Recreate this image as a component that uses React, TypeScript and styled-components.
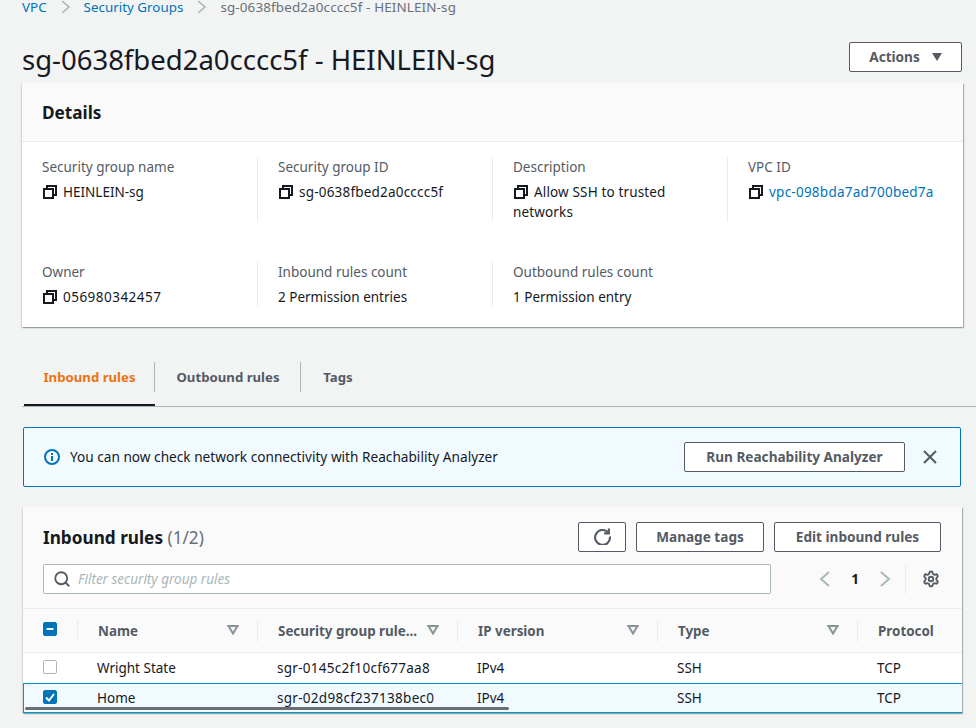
import React from 'react'
import styled, { createGlobalStyle } from 'styled-components'
import { Search, Settings } from 'lucide-react'

const GlobalStyle = createGlobalStyle`
    html, body {
        margin: 0;
        height: 100%;
        overflow: hidden;
        background: #f2f3f3;
        color: #16191f;
        font-family: "Noto Sans", "Open Sans", sans-serif;
        font-size: 14px;
    }
    * { box-sizing: border-box; }
`;

const Page = styled.div`
    display: flex;
    flex-direction: column;
    width: 976px;
    height: 728px;
    overflow: hidden;
`;

const Crumbs = styled.nav`
    display: flex;
    align-items: center;
    height: 14px;
    padding-left: 22px;
    font-size: 13.4px;
    line-height: 14px;
    color: #687078;
`;

const CrumbLink = styled.a`
    color: #0073bb;
`;

const CrumbCurrent = styled.span`
    letter-spacing: 0.15px;
`;

const CrumbSep = styled.svg`
    width: 9px;
    height: 14px;
    margin: 0 14px 0 14px;
    fill: none;
    stroke: #aab7b8;
    stroke-width: 1.6;
`;

const TitleRow = styled.div`
    display: flex;
    align-items: flex-start;
    justify-content: space-between;
    padding: 28px 14px 0 22px;
    height: 69px;
`;

const Title = styled.h1`
    margin: 0;
    font-size: 27.5px;
    font-weight: 400;
    line-height: 35px;
`;

const Button = styled.button<{ $w: number }>`
    display: flex;
    align-items: center;
    justify-content: center;
    gap: 12px;
    width: ${p => p.$w}px;
    height: 30px;
    padding: 0 0 1px;
    background: #fff;
    border: 1px solid #545b64;
    border-radius: 2px;
    color: #545b64;
    font-family: inherit;
    font-size: 13.6px;
    font-weight: 700;
`;

const Caret = styled.span`
    width: 0;
    height: 0;
    border-left: 5.5px solid transparent;
    border-right: 5.5px solid transparent;
    border-top: 8px solid #545b64;
`;

const DetailsCard = styled.section`
    width: 941px;
    margin-left: 22px;
    background: #fff;
    box-shadow: 1px 1px 1px 0 rgba(0, 28, 36, 0.3), -1px 1px 1px 0 rgba(0, 28, 36, 0.12);
`;

const CardHeader = styled.div`
    display: flex;
    align-items: center;
    height: 59px;
    padding-left: 20px;
    background: #fafafa;
    border-bottom: 1px solid #eaeded;
`;

const CardTitle = styled.h2`
    margin: 0;
    font-size: 17.2px;
    font-weight: 700;
`;

const DetailsGrid = styled.div`
    display: grid;
    grid-template-columns: 236px 235px 235px 235px;
    grid-auto-rows: auto;
    row-gap: 40px;
    padding: 15px 0 20px 0;
`;

const Field = styled.div<{ $last?: boolean }>`
    min-height: 45px;
    padding: 0 16px 0 20px;
    border-right: ${p => (p.$last ? 'none' : '1px solid #eaeded')};
`;

const FieldTop = styled(Field)`
    min-height: 65px;
`;

const FieldLabel = styled.div`
    color: #545b64;
    font-size: 13.5px;
    line-height: 20px;
    margin-bottom: 5px;
`;

const FieldValue = styled.div<{ $tracking?: number }>`
    font-size: 13.5px;
    line-height: 20px;
    letter-spacing: ${p => p.$tracking ?? 0}px;
`;

const ValueLink = styled.a`
    color: #0073bb;
`;

const CopyIcon = styled.svg`
    display: inline-block;
    width: 14px;
    height: 14px;
    margin: 0 6px 0 1px;
    vertical-align: -2px;
    fill: none;
    stroke: #16191f;
    stroke-width: 2;
`;

const Tabs = styled.div`
    display: flex;
    align-items: flex-start;
    height: 45px;
    margin: 35px 0 0 22px;
    padding-left: 2px;
    border-bottom: 1px solid #aab7b8;
`;

const Tab = styled.div<{ $active?: boolean; $w: number; $last?: boolean }>`
    position: relative;
    width: ${p => p.$w}px;
    height: 44px;
    padding-top: 5px;
    text-align: center;
    font-size: 13.2px;
    font-weight: 700;
    line-height: 20px;
    color: ${p => (p.$active ? '#ec7211' : '#545b64')};
    border-bottom: ${p => (p.$active ? '2px solid #16191f' : 'none')};

    &::after {
        content: '';
        display: ${p => (p.$last ? 'none' : 'block')};
        position: absolute;
        right: 0;
        top: 0;
        width: 1px;
        height: 30px;
        background: #aab7b8;
    }
`;

const Banner = styled.div`
    display: flex;
    align-items: center;
    width: 938px;
    height: 60px;
    margin: 20px 0 20px 23px;
    padding-left: 20px;
    background: #f1faff;
    border: 1px solid #0073bb;
    border-radius: 2px;
`;

const InfoIcon = styled.svg`
    width: 16px;
    height: 16px;
    margin-right: 10px;
    flex: none;
`;

const BannerText = styled.div`
    flex: 1;
    padding-bottom: 2px;
    font-size: 13.65px;
`;

const CloseIcon = styled.svg`
    width: 14px;
    height: 14px;
    margin: 0 23px 0 18px;
    fill: none;
    stroke: #545b64;
    stroke-width: 2;
`;

const TableCard = styled.section`
    position: relative;
    width: 939px;
    height: 206px;
    margin-left: 23px;
    background: #fff;
    box-shadow: 1px 1px 1px 0 rgba(0, 28, 36, 0.3), -1px 1px 1px 0 rgba(0, 28, 36, 0.12);
    overflow: hidden;
`;

const TableHead = styled.div`
    height: 102px;
    padding: 15px 21px 0 20px;
    background: #fafafa;
    border-bottom: 1px solid #eaeded;
`;

const HeadRow = styled.div`
    display: flex;
    align-items: center;
    gap: 10px;
    height: 30px;
`;

const TableTitle = styled(CardTitle)`
    flex: 1;
`;

const Count = styled.span`
    color: #687078;
    font-weight: 400;
`;

const FilterRow = styled.div`
    display: flex;
    align-items: center;
    height: 30px;
    margin-top: 12px;
`;

const FilterInput = styled.div`
    display: flex;
    align-items: center;
    gap: 7px;
    width: 728px;
    height: 30px;
    padding-left: 9px;
    background: #fff;
    border: 1px solid #aab7b8;
    border-radius: 2px;
    color: #aab7b8;
    font-size: 13.5px;
    font-style: italic;
`;

const Pager = styled.div`
    display: flex;
    align-items: center;
    gap: 16px;
    margin-left: 48px;
    font-size: 13.5px;
    font-weight: 700;
`;

const PagerArrow = styled.svg`
    width: 12px;
    height: 16px;
    fill: none;
    stroke: #aab7b8;
    stroke-width: 2;
`;

const PagerNumber = styled.span`
    width: 16px;
    text-align: center;
`;

const ToolDivider = styled.div`
    width: 1px;
    height: 30px;
    margin: 0 16px 0 14px;
    background: #eaeded;
`;

const Row = styled.div<{ $head?: boolean; $selected?: boolean }>`
    display: grid;
    grid-template-columns: 54px 180px 200px 200px 200px 105px;
    align-items: center;
    height: ${p => (p.$head ? '44px' : '30px')};
    background: ${p => (p.$head ? '#fafafa' : p.$selected ? '#f1faff' : '#fff')};
    border-bottom: ${p => (p.$head ? '1px solid #eaeded' : 'none')};
    box-shadow: ${p => (p.$selected
        ? 'inset 1px 0 0 #0099c5, inset 0 1px 0 #0099c5, inset 0 -1px 0 #0099c5'
        : 'none')};
`;

const HeadCell = styled.div`
    display: flex;
    align-items: center;
    justify-content: space-between;
    height: 22px;
    padding: 0 18px 0 20px;
    border-left: 1px solid #eaeded;
    color: #545b64;
    font-size: 13.4px;
    font-weight: 700;
    white-space: nowrap;
`;

const SortIcon = styled.svg`
    width: 12px;
    height: 10px;
    margin-top: -2px;
    fill: none;
    stroke: #879596;
    stroke-width: 2;
`;

const CheckCell = styled.div`
    display: flex;
    align-items: center;
    padding-left: 20px;
`;

const Box = styled.span<{ $on?: boolean }>`
    display: flex;
    align-items: center;
    justify-content: center;
    width: 14px;
    height: 14px;
    margin-top: -3px;
    background: ${p => (p.$on ? '#0073bb' : '#fff')};
    border: 1px solid ${p => (p.$on ? '#0073bb' : '#aab7b8')};
    border-radius: 2px;
`;

const BoxMark = styled.svg`
    width: 12px;
    height: 12px;
    fill: none;
    stroke: #fff;
    stroke-width: 2;
`;

const Cell = styled.div<{ $tracking?: number }>`
    padding-left: 20px;
    margin-top: -1px;
    font-size: 13.5px;
    letter-spacing: ${p => p.$tracking ?? 0}px;
`;

const Scrollbar = styled.div`
    position: absolute;
    left: 2px;
    bottom: 3px;
    width: 484px;
    height: 3px;
    border-radius: 2px;
    background: #6b6f73;
`;

const rules = [
    { name: 'Wright State', id: 'sgr-0145c2f10cf677aa8', selected: false },
    { name: 'Home', id: 'sgr-02d98cf237138bec0', selected: true },
]

const Copy = () => (
    <CopyIcon viewBox="0 0 14 14">
        <rect x="1" y="4" width="9" height="9" />
        <path d="M4 4V1h9v9h-3" />
    </CopyIcon>
)

const Sort = () => (
    <SortIcon viewBox="0 0 12 10">
        <path d="M1.5 1h9L6 8.5z" />
    </SortIcon>
)

const Sep = () => (
    <CrumbSep viewBox="0 0 9 14">
        <path d="M1 1l7 6-7 6" />
    </CrumbSep>
)

export default function App() {
    return (
        <Page>
            <GlobalStyle />
            <Crumbs>
                <CrumbLink>VPC</CrumbLink>
                <Sep />
                <CrumbLink>Security Groups</CrumbLink>
                <Sep />
                <CrumbCurrent>sg-0638fbed2a0cccc5f - HEINLEIN-sg</CrumbCurrent>
            </Crumbs>
            <TitleRow>
                <Title>sg-0638fbed2a0cccc5f - HEINLEIN-sg</Title>
                <Button $w={113}>Actions <Caret /></Button>
            </TitleRow>
            <DetailsCard>
                <CardHeader><CardTitle>Details</CardTitle></CardHeader>
                <DetailsGrid>
                    <FieldTop>
                        <FieldLabel>Security group name</FieldLabel>
                        <FieldValue><Copy />HEINLEIN-sg</FieldValue>
                    </FieldTop>
                    <FieldTop>
                        <FieldLabel>Security group ID</FieldLabel>
                        <FieldValue $tracking={0.2}><Copy />sg-0638fbed2a0cccc5f</FieldValue>
                    </FieldTop>
                    <FieldTop>
                        <FieldLabel>Description</FieldLabel>
                        <FieldValue $tracking={0.15}><Copy />Allow SSH to trusted networks</FieldValue>
                    </FieldTop>
                    <FieldTop $last>
                        <FieldLabel>VPC ID</FieldLabel>
                        <FieldValue $tracking={0.24}><Copy /><ValueLink>vpc-098bda7ad700bed7a</ValueLink></FieldValue>
                    </FieldTop>
                    <Field>
                        <FieldLabel>Owner</FieldLabel>
                        <FieldValue $tracking={0.48}><Copy />056980342457</FieldValue>
                    </Field>
                    <Field>
                        <FieldLabel>Inbound rules count</FieldLabel>
                        <FieldValue>2 Permission entries</FieldValue>
                    </Field>
                    <Field $last>
                        <FieldLabel>Outbound rules count</FieldLabel>
                        <FieldValue>1 Permission entry</FieldValue>
                    </Field>
                </DetailsGrid>
            </DetailsCard>
            <Tabs>
                <Tab $active $w={131}>Inbound rules</Tab>
                <Tab $w={146}>Outbound rules</Tab>
                <Tab $w={74} $last>Tags</Tab>
            </Tabs>
            <Banner>
                <InfoIcon viewBox="0 0 16 16">
                    <circle cx="8" cy="8" r="7" fill="none" stroke="#0073bb" strokeWidth="2" />
                    <rect x="7" y="7" width="2" height="5" fill="#0073bb" />
                    <rect x="7" y="4" width="2" height="2" fill="#0073bb" />
                </InfoIcon>
                <BannerText>You can now check network connectivity with Reachability Analyzer</BannerText>
                <Button $w={221}>Run Reachability Analyzer</Button>
                <CloseIcon viewBox="0 0 14 14"><path d="M1 1l12 12M13 1L1 13" /></CloseIcon>
            </Banner>
            <TableCard>
                <TableHead>
                    <HeadRow>
                        <TableTitle>Inbound rules <Count>(1/2)</Count></TableTitle>
                        <Button $w={48}>
                            <svg width="17" height="17" viewBox="0 0 16 16" fill="none" stroke="#545b64" strokeWidth="2">
                                <path d="M13.5 4.5A7 7 0 1 0 15 8" />
                                <path d="M14 0.5v4.5H9.5" />
                            </svg>
                        </Button>
                        <Button $w={128}>Manage tags</Button>
                        <Button $w={167}>Edit inbound rules</Button>
                    </HeadRow>
                    <FilterRow>
                        <FilterInput>
                            <Search size={18} color="#545b64" strokeWidth={2.4} />
                            Filter security group rules
                        </FilterInput>
                        <Pager>
                            <PagerArrow viewBox="0 0 12 16"><path d="M10 1L2 8l8 7" /></PagerArrow>
                            <PagerNumber>1</PagerNumber>
                            <PagerArrow viewBox="0 0 12 16"><path d="M2 1l8 7-8 7" /></PagerArrow>
                        </Pager>
                        <ToolDivider />
                        <Settings size={18} color="#545b64" strokeWidth={2.5} />
                    </FilterRow>
                </TableHead>
                <Row $head>
                    <CheckCell>
                        <Box $on><BoxMark viewBox="0 0 12 12"><path d="M2.5 6h7" /></BoxMark></Box>
                    </CheckCell>
                    <HeadCell>Name <Sort /></HeadCell>
                    <HeadCell>Security group rule... <Sort /></HeadCell>
                    <HeadCell>IP version <Sort /></HeadCell>
                    <HeadCell>Type <Sort /></HeadCell>
                    <HeadCell>Protocol</HeadCell>
                </Row>
                {rules.map(rule => (
                    <Row key={rule.id} $selected={rule.selected}>
                        <CheckCell>
                            <Box $on={rule.selected}>
                                {rule.selected && <BoxMark viewBox="0 0 12 12"><path d="M2 6.5l3 3 5-6.5" /></BoxMark>}
                            </Box>
                        </CheckCell>
                        <Cell>{rule.name}</Cell>
                        <Cell $tracking={0.28}>{rule.id}</Cell>
                        <Cell>IPv4</Cell>
                        <Cell>SSH</Cell>
                        <Cell>TCP</Cell>
                    </Row>
                ))}
                <Scrollbar />
            </TableCard>
        </Page>
    )
}
